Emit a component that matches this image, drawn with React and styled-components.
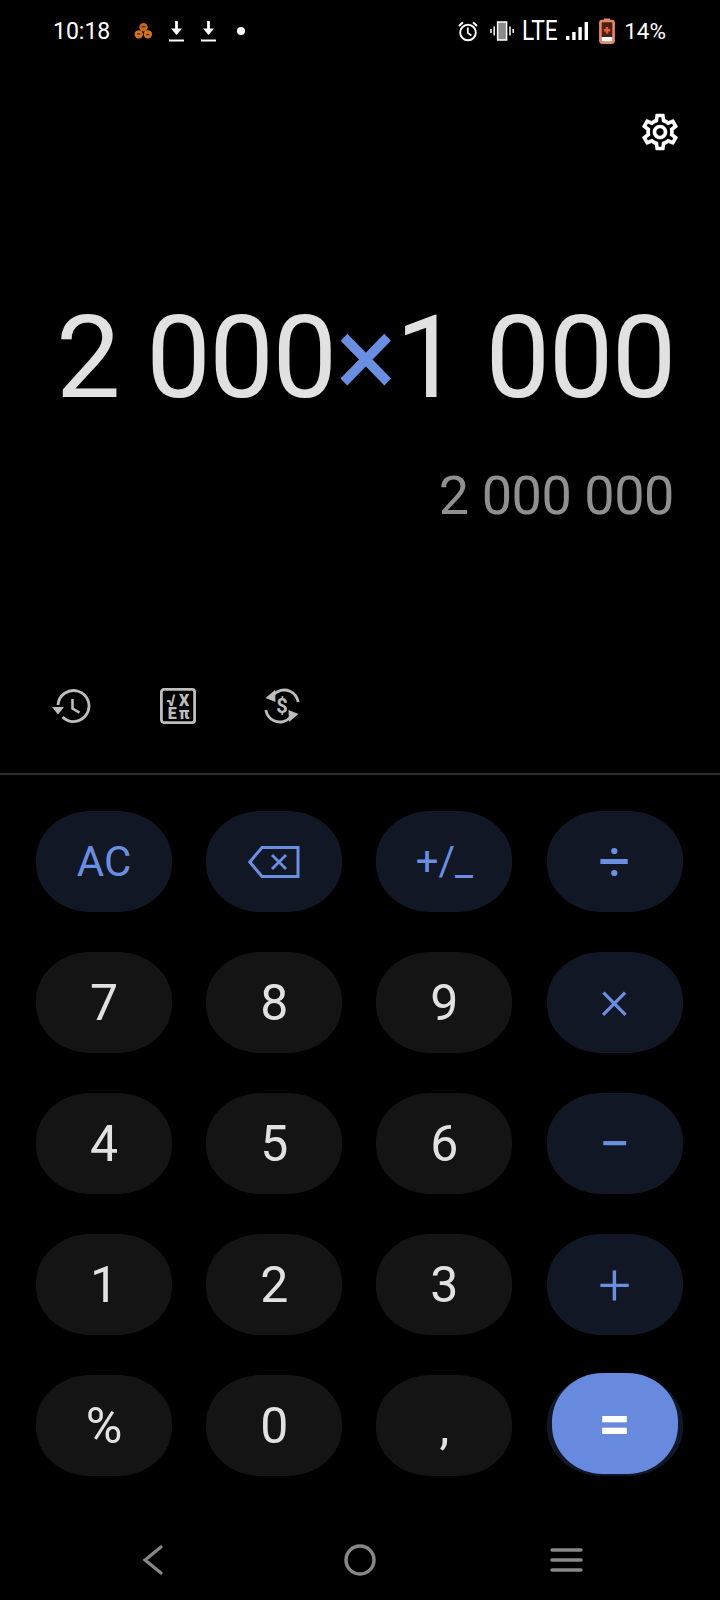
import React from 'react'
import styled, { createGlobalStyle } from 'styled-components'
import { MdOutlineSettings } from 'react-icons/md'

const GlobalStyle = createGlobalStyle`
   html, body {
      margin: 0;
      padding: 0;
      background: #000;
   }
`

const Screen = styled.div`
   width: 720px;
   height: 1600px;
   background: #000;
   font-family: Roboto, 'Liberation Sans', sans-serif;
   display: flex;
   flex-direction: column;
   overflow: hidden;
`

// --- Status bar ---

const StatusBar = styled.div`
   height: 62px;
   flex: none;
   display: flex;
   align-items: center;
   justify-content: space-between;
   padding: 0 54px 0 53px;
   color: #fff;
   box-sizing: border-box;
`

const StatusGroup = styled.div`
   display: flex;
   align-items: center;
`

const StatusItem = styled.div`
   display: flex;
   align-items: center;
   margin-right: ${(p) => p.$mr || 0}px;
`

const StatusText = styled.span`
   font-size: ${(p) => p.$size || 23}px;
   line-height: 1;
`

const NetworkText = styled.span`
   display: block;
   width: 35px;
   font-size: 27px;
   line-height: 1;
   transform: scaleX(0.84);
   transform-origin: left center;
   white-space: nowrap;
`

const NotificationDot = styled.span`
   display: block;
   width: 8px;
   height: 8px;
   border-radius: 50%;
   background: #fff;
`

// --- Display ---

const GearRow = styled.div`
   margin-top: 35px;
   height: 69px;
   flex: none;
   display: flex;
   justify-content: flex-end;
   align-items: center;
   padding-right: 38px;
   color: #fff;
   font-size: 44px;
`

const Expression = styled.div`
   margin-top: 116px;
   height: 150px;
   flex: none;
   display: flex;
   align-items: center;
   justify-content: flex-end;
   padding-right: 45px;
   font-size: 115px;
   letter-spacing: -1.5px;
   font-weight: 400;
   color: #e1e1e1;
   white-space: pre;
   line-height: 1;
`

const Times = styled.span`
   color: #6a8fe0;
   font-weight: 400;
`

const Result = styled.div`
   margin-top: 31px;
   height: 66px;
   flex: none;
   display: flex;
   align-items: center;
   justify-content: flex-end;
   padding-right: 46px;
   font-size: 54px;
   font-weight: 400;
   letter-spacing: -0.45px;
   color: #909090;
   white-space: pre;
   line-height: 1;
`

const ToolRow = styled.div`
   margin-top: 159px;
   height: 36px;
   flex: none;
   display: flex;
   align-items: center;
   padding-left: 52px;
   gap: 68px;
`

const Divider = styled.div`
   margin-top: 49px;
   height: 2px;
   flex: none;
   background: #2e2e2e;
`

// --- Keypad ---

const Keypad = styled.div`
   margin-top: 36px;
   display: grid;
   grid-template-columns: repeat(4, 136px);
   grid-auto-rows: 101px;
   column-gap: 34.2px;
   row-gap: 40px;
   padding-left: 36px;
   flex: none;
`

const Key = styled.div`
   position: relative;
   box-sizing: border-box;
   border-radius: 40% / 48%;
   display: flex;
   align-items: center;
   justify-content: center;
   padding-bottom: ${(p) => p.$lift || 0}px;
   background: ${(p) => (p.$accent ? '#111724' : '#141414')};
   color: ${(p) => (p.$accent ? '#6a8fe0' : '#e1e1e1')};
   font-size: ${(p) => p.$size || 50}px;
   font-weight: ${(p) => p.$weight || 400};
   line-height: 1;
`

const EqualsFace = styled.div`
   position: absolute;
   top: -2px;
   bottom: 2px;
   left: 5px;
   right: 5px;
   border-radius: 40% / 48%;
   background: #678ade;
   color: #fff;
   display: flex;
   align-items: center;
   justify-content: center;
   font-size: 56px;
   font-weight: 700;
`

// --- Navigation bar ---

const NavBar = styled.div`
   margin-top: 56px;
   height: 56px;
   flex: none;
   display: grid;
   grid-template-columns: repeat(3, 1fr);
   align-items: center;
   justify-items: center;
   padding: 0 50px;
`

const AppCluster = () => (
   <svg width="19" height="18" viewBox="0 0 20 18" style={{ display: 'block' }}>
      <circle cx="10" cy="5" r="4.4" fill="#c9691f" />
      <circle cx="5" cy="12.5" r="4.4" fill="#d5741f" />
      <circle cx="14.6" cy="12.5" r="4.4" fill="#d5741f" />
      <path d="M8 4.5h4M3.5 12h3M13 12.5l3 .5" stroke="#2b1605" strokeWidth="1.2" />
   </svg>
)

const Download = () => (
   <svg width="15" height="21" viewBox="0 0 15 21" style={{ display: 'block' }}>
      <path d="M7.5 0v10" stroke="#fff" strokeWidth="2.8" />
      <path d="M2 7.5h11L7.5 14z" fill="#fff" />
      <path d="M0 19.5h15" stroke="#fff" strokeWidth="2" />
   </svg>
)

const Alarm = () => (
   <svg width="20" height="22" viewBox="0 0 20 22" fill="none" stroke="#fff" style={{ display: 'block' }}>
      <circle cx="10" cy="12.5" r="7.8" strokeWidth="1.9" />
      <path d="M9.8 7.5v5.4l3.6 2.6" strokeWidth="1.7" />
      <path d="M1 6L5 2.2M19 6L15 2.2" strokeWidth="1.9" />
   </svg>
)

const Vibrate = () => (
   <svg width="24" height="20" viewBox="0 0 24 20" style={{ display: 'block' }}>
      <rect x="7.6" y="1" width="9" height="18" fill="#8a8a8a" stroke="#fff" strokeWidth="1.5" />
      <path d="M1 8v4M4.2 5.5v9M20 5.5v9M23.2 8v4" stroke="#fff" strokeWidth="1.5" />
   </svg>
)

const Signal = () => (
   <svg width="22" height="20" viewBox="0 0 22 20" fill="#fff" style={{ display: 'block' }}>
      <rect x="0" y="15" width="3.4" height="4" />
      <rect x="6.2" y="11" width="3.4" height="8" />
      <rect x="12.4" y="6" width="3.4" height="13" />
      <rect x="18.6" y="1" width="3.4" height="18" />
   </svg>
)

const Battery = () => (
   <svg width="16" height="26" viewBox="0 0 16 26" style={{ display: 'block' }}>
      <rect x="5" y="0.5" width="6" height="3" fill="#e8866a" />
      <rect x="1.4" y="3" width="13.2" height="21.6" rx="1.8" fill="#4a1f14" stroke="#e8866a" strokeWidth="2.6" />
      <rect x="2.7" y="19" width="10.6" height="4.4" fill="#fff" />
      <path d="M8 9v6.4M4.8 12.2h6.4" stroke="#ee5a36" strokeWidth="2.4" />
   </svg>
)

const HistoryIcon = () => (
   <svg width="40" height="36" viewBox="0 0 40 36" fill="none" style={{ display: 'block' }}>
      <path d="M6 17A15.5 15.5 0 1 1 10.5 29" stroke="#bdbdbd" strokeWidth="2.8" />
      <path d="M0 19h12L6 26.5z" fill="#bdbdbd" />
      <path d="M20.5 11v9.5l7 4.2" stroke="#bdbdbd" strokeWidth="2.6" />
   </svg>
)

const SciIcon = () => (
   <svg width="36" height="36" viewBox="0 0 36 36" style={{ display: 'block' }}>
      <rect x="1.4" y="1.4" width="33.2" height="33.2" rx="2.5" fill="none" stroke="#bdbdbd" strokeWidth="2.8" />
      <g fill="#bdbdbd" fontFamily="Roboto, sans-serif" fontWeight="900" fontSize="16" textAnchor="middle">
         <text x="11" y="17.8">√</text>
         <text x="24" y="17.8">X</text>
         <text x="12.3" y="31">E</text>
         <text x="24" y="31">π</text>
      </g>
   </svg>
)

const CurrencyIcon = () => (
   <svg width="37" height="36" viewBox="0 0 37 36" style={{ display: 'block' }}>
      <path d="M9 7.5C13 2.5 20 0.5 26 3.2C30.5 5.2 33.2 9 34.2 14" fill="none" stroke="#bdbdbd" strokeWidth="2.8" />
      <path d="M11 2L11.5 14L1.5 10z" fill="#bdbdbd" />
      <path d="M27 28.5C23 33.5 16 35.5 10 32.8C5.5 30.8 2.8 27 1.8 22" fill="none" stroke="#bdbdbd" strokeWidth="2.8" />
      <path d="M25 34L24.5 22L34.5 26z" fill="#bdbdbd" />
      <text x="18" y="25" fill="#bdbdbd" fontFamily="Roboto, sans-serif" fontWeight="700" fontSize="20" textAnchor="middle">$</text>
   </svg>
)

const BackspaceIcon = () => (
   <svg width="52" height="32" viewBox="0 0 52 32" fill="none" stroke="#6a8fe0" strokeWidth="3">
      <path d="M50 1.6H14L1.8 16L14 30.4H50z" />
      <path d="M24 9l14 14M38 9L24 23" strokeWidth="2.8" />
   </svg>
)

const rows = [
   [{ t: 'AC', accent: true, size: 42 }, { icon: true, accent: true }, { t: '+/_', accent: true, size: 40 }, { t: '÷', accent: true, size: 56 }],
   [{ t: '7' }, { t: '8' }, { t: '9' }, { t: '×', accent: true, size: 58, weight: 300, lift: 8 }],
   [{ t: '4' }, { t: '5' }, { t: '6' }, { t: '−', accent: true, size: 56 }],
   [{ t: '1' }, { t: '2' }, { t: '3' }, { t: '+', accent: true, size: 58, weight: 300 }],
   [{ t: '%' }, { t: '0' }, { t: ',' }, { equals: true, accent: true }],
]

function App() {
   return (
      <Screen>
         <GlobalStyle />
         <StatusBar>
            <StatusGroup>
               <StatusItem $mr={24}><StatusText>10:18</StatusText></StatusItem>
               <StatusItem $mr={16}><AppCluster /></StatusItem>
               <StatusItem $mr={17}><Download /></StatusItem>
               <StatusItem $mr={21}><Download /></StatusItem>
               <NotificationDot />
            </StatusGroup>
            <StatusGroup>
               <StatusItem $mr={12}><Alarm /></StatusItem>
               <StatusItem $mr={8}><Vibrate /></StatusItem>
               <StatusItem $mr={9}><NetworkText>LTE</NetworkText></StatusItem>
               <StatusItem $mr={11}><Signal /></StatusItem>
               <StatusItem $mr={9}><Battery /></StatusItem>
               <StatusText $size={22.5}>14%</StatusText>
            </StatusGroup>
         </StatusBar>

         <GearRow>
            <MdOutlineSettings />
         </GearRow>

         <Expression>
            2 000<Times>×</Times>1 000
         </Expression>
         <Result>2 000 000</Result>

         <ToolRow>
            <HistoryIcon />
            <SciIcon />
            <CurrencyIcon />
         </ToolRow>
         <Divider />

         <Keypad>
            {rows.flat().map((k, i) => (
               <Key key={i} $accent={k.accent} $size={k.size} $weight={k.weight} $lift={k.lift}>
                  {k.icon && <BackspaceIcon />}
                  {k.equals ? <EqualsFace>=</EqualsFace> : k.t}
               </Key>
            ))}
         </Keypad>

         <NavBar>
            <svg width="22" height="30" viewBox="0 0 22 30" fill="none" stroke="#888" strokeWidth="3.2" strokeLinecap="round">
               <path d="M19 2L3 15l16 13" />
            </svg>
            <svg width="32" height="32" viewBox="0 0 32 32" fill="none" stroke="#888" strokeWidth="3.4">
               <circle cx="16" cy="16" r="14" />
            </svg>
            <svg width="33" height="24" viewBox="0 0 33 24" fill="none" stroke="#888" strokeWidth="3.4" strokeLinecap="round">
               <path d="M2 2h29M2 12h29M2 22h29" />
            </svg>
         </NavBar>
      </Screen>
   )
}

export default App
